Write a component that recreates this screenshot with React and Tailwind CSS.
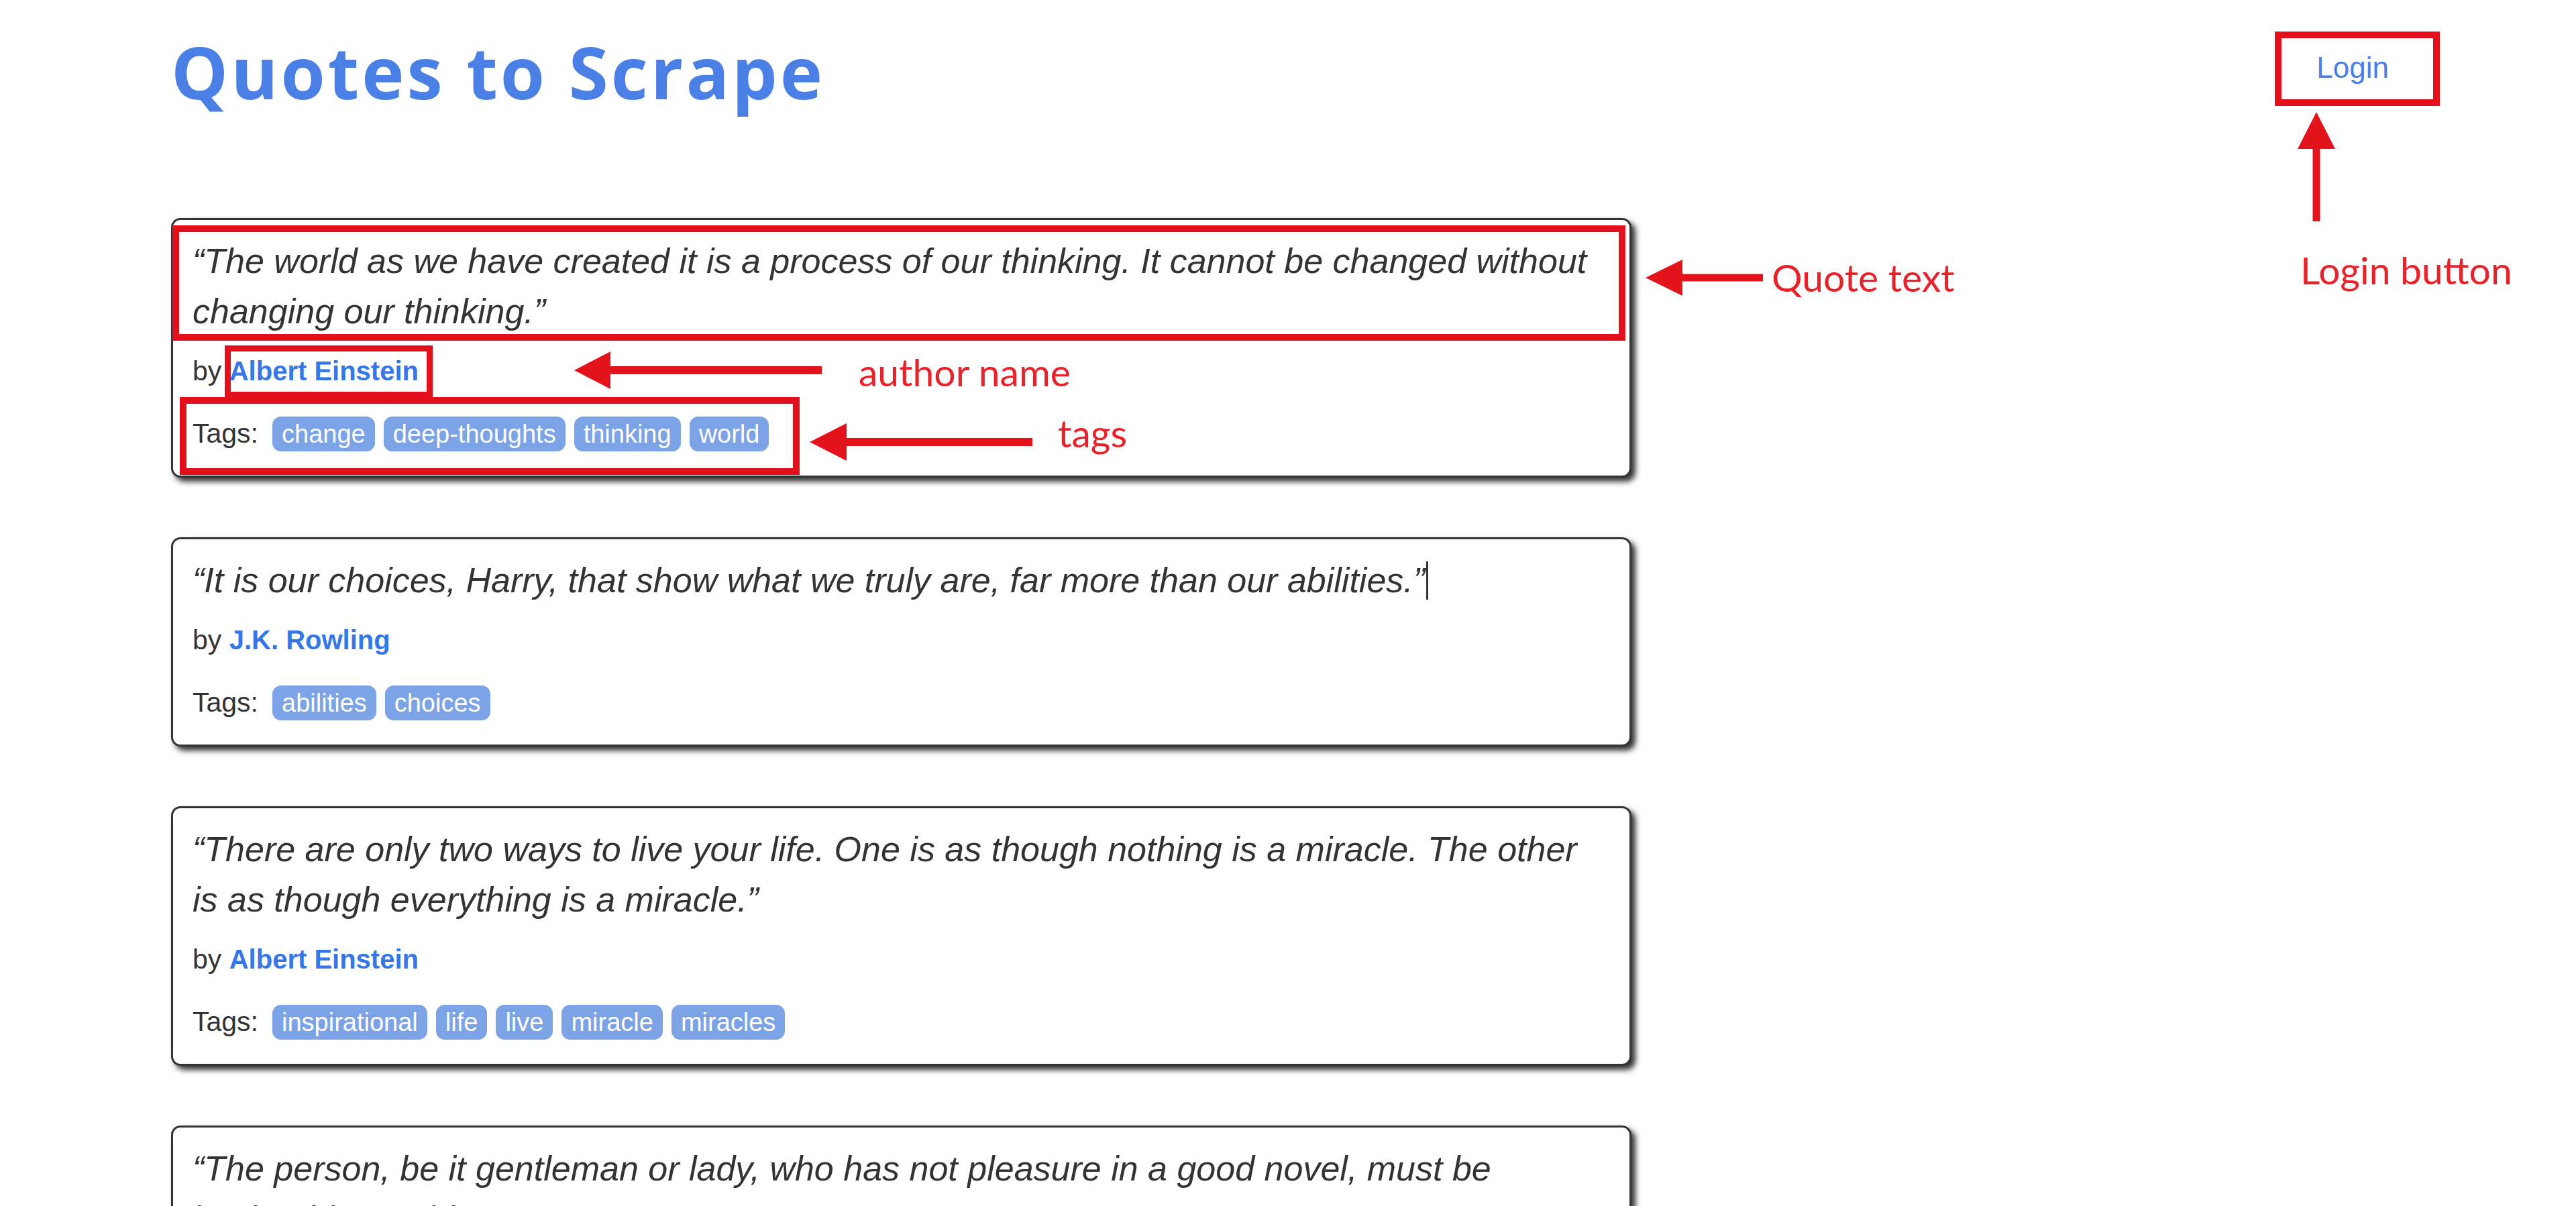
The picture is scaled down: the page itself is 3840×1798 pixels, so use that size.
import React from 'react';

const quotes = [
  {
    text: '“The world as we have created it is a process of our thinking. It cannot be changed without changing our thinking.”',
    author: 'Albert Einstein',
    tags: ['change', 'deep-thoughts', 'thinking', 'world'],
  },
  {
    text: '“It is our choices, Harry, that show what we truly are, far more than our abilities.”',
    author: 'J.K. Rowling',
    tags: ['abilities', 'choices'],
    cursor: true,
  },
  {
    text: '“There are only two ways to live your life. One is as though nothing is a miracle. The other is as though everything is a miracle.”',
    author: 'Albert Einstein',
    tags: ['inspirational', 'life', 'live', 'miracle', 'miracles'],
  },
  {
    text: '“The person, be it gentleman or lady, who has not pleasure in a good novel, must be intolerably stupid.”',
    author: 'Jane Austen',
    tags: ['aliteracy', 'books', 'classic', 'humor'],
  },
];

function Quote({ quote }) {
  return (
    <div className="mb-[89px] rounded-[14px] border-[3px] border-[#333] bg-white px-[29px] pt-[24px] pb-[34px] shadow-[6px_6px_9px_#333]">
      <p className="mb-[22px] text-[52px] italic leading-[75px] text-[#333]">
        {quote.text}
        {quote.cursor && (
          <span className="ml-[2px] inline-block h-[57px] w-[3px] bg-[#333] align-[-11px]" />
        )}
      </p>
      <div className="text-[41px] leading-[58px] text-[#333]">
        by <span className="text-[40px] font-bold text-[#3677e8]">{quote.author}</span>
      </div>
      <div className="mt-[35px] flex items-baseline text-[41px] leading-[58px] text-[#333]">
        <span>Tags:</span>
        <div className="ml-[21px] flex items-baseline gap-[13px]">
          {quote.tags.map((tag) => (
            <span
              key={tag}
              className="rounded-[13px] bg-[#7ca3e6] px-[14px] py-[6px] text-[38px] leading-[40px] text-white"
            >
              {tag}
            </span>
          ))}
        </div>
      </div>
    </div>
  );
}

// red annotation arrows drawn over the screenshot
function ArrowLeft({ length, head, half, thick }) {
  const a = half - thick / 2;
  const b = half + thick / 2;
  return (
    <svg className="shrink-0" width={length} height={half * 2} viewBox={`0 0 ${length} ${half * 2}`}>
      <polygon
        fill="#e3131c"
        points={`0,${half} ${head},0 ${head},${a} ${length},${a} ${length},${b} ${head},${b} ${head},${half * 2}`}
      />
    </svg>
  );
}

function ArrowUp({ length, head, half, thick }) {
  const a = half - thick / 2;
  const b = half + thick / 2;
  return (
    <svg className="shrink-0" width={half * 2} height={length} viewBox={`0 0 ${half * 2} ${length}`}>
      <polygon
        fill="#e3131c"
        points={`${half},0 ${half * 2},${head} ${b},${head} ${b},${length} ${a},${length} ${a},${head} 0,${head}`}
      />
    </svg>
  );
}

const label = "font-['Lato',sans-serif] text-[57px] leading-none text-[#e8222b] whitespace-nowrap";

export default function App() {
  return (
    <div className="relative min-h-screen bg-white font-['Liberation_Sans',Arial,sans-serif]">
      <div className="w-[3561px] pl-[255px]">
        {/* Header */}
        <div className="flex items-start justify-between pt-[49px]">
          <h1 className="mt-[4px] font-['Open_Sans',sans-serif] text-[107px] font-bold leading-none tracking-[4px] text-[#4a80e6]">
            Quotes to Scrape
          </h1>
          <a href="#" className="mt-[30px] text-[44px] leading-none text-[#4a80e6]">
            Login
          </a>
        </div>

        {/* Quotes */}
        <div className="mt-[165px] w-[2177px]">
          {quotes.map((q, i) => (
            <Quote key={i} quote={q} />
          ))}
        </div>
      </div>

      {/* Annotation boxes */}
      <div className="pointer-events-none absolute left-[257px] top-[336px] h-[172px] w-[2166px] border-[10px] border-[#e3101b]" />
      <div className="pointer-events-none absolute left-[335px] top-[515px] h-[78px] w-[310px] border-[9px] border-[#e3101b]" />
      <div className="pointer-events-none absolute left-[268px] top-[592px] h-[116px] w-[924px] border-[10px] border-[#e3101b]" />
      <div className="pointer-events-none absolute left-[3391px] top-[47px] h-[111px] w-[246px] border-[10px] border-[#e3101b]" />

      {/* Annotation callouts */}
      <div className="absolute left-[2453px] top-[385px] flex items-center gap-[13px]">
        <ArrowLeft length={175} head={55} half={27} thick={11} />
        <span className={label}>Quote text</span>
      </div>
      <div className="absolute left-[856px] top-[521px] flex items-center gap-[55px]">
        <ArrowLeft length={369} head={54} half={28} thick={12} />
        <span className={`${label} mt-[5px]`}>author name</span>
      </div>
      <div className="absolute left-[1207px] top-[631px] flex items-center gap-[38px]">
        <ArrowLeft length={332} head={55} half={28} thick={12} />
        <span className={`${label} -mt-[28px]`}>tags</span>
      </div>
      <div className="absolute left-[3425px] top-[167px] flex flex-col items-start gap-[44px]">
        <ArrowUp length={163} head={55} half={28} thick={11} />
        <span className={`${label} ml-[4px]`}>Login button</span>
      </div>
    </div>
  );
}
